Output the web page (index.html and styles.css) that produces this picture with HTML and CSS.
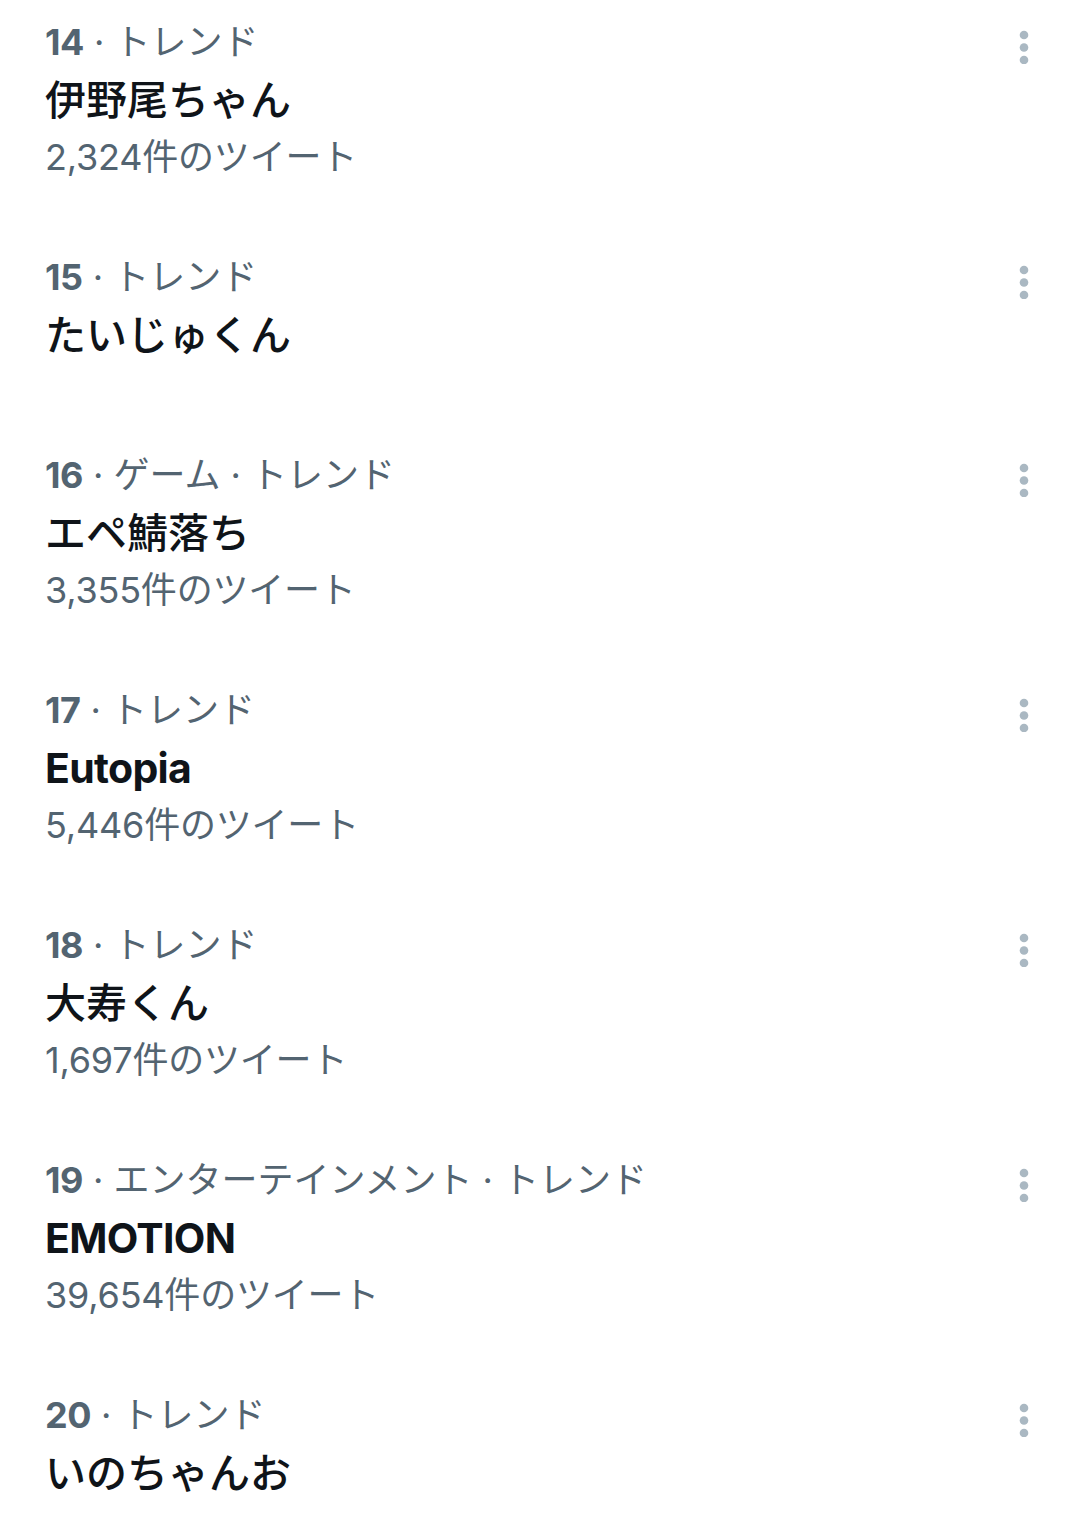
FILE: index.html
```html
<!DOCTYPE html>
<html lang="ja">
<head>
<meta charset="utf-8">
<link rel="stylesheet" href="styles.css">
</head>
<body>
<div class="list">
  <div class="trend">
    <div class="info">
      <div class="meta"><b>14</b> · トレンド</div>
      <div class="name">伊野尾ちゃん</div>
      <div class="count">2,324件のツイート</div>
    </div>
    <svg class="more" viewBox="0 0 40 44"><circle cx="20" cy="15" r="4.3"/><circle cx="20" cy="27.5" r="4.3"/><circle cx="20" cy="40" r="4.3"/></svg>
  </div>
  <div class="trend">
    <div class="info">
      <div class="meta"><b>15</b> · トレンド</div>
      <div class="name">たいじゅくん</div>
    </div>
    <svg class="more" viewBox="0 0 40 44"><circle cx="20" cy="15" r="4.3"/><circle cx="20" cy="27.5" r="4.3"/><circle cx="20" cy="40" r="4.3"/></svg>
  </div>
  <div class="trend">
    <div class="info">
      <div class="meta"><b>16</b> · ゲーム · トレンド</div>
      <div class="name">エペ鯖落ち</div>
      <div class="count">3,355件のツイート</div>
    </div>
    <svg class="more" viewBox="0 0 40 44"><circle cx="20" cy="15" r="4.3"/><circle cx="20" cy="27.5" r="4.3"/><circle cx="20" cy="40" r="4.3"/></svg>
  </div>
  <div class="trend">
    <div class="info">
      <div class="meta"><b>17</b> · トレンド</div>
      <div class="name latin">Eutopia</div>
      <div class="count">5,446件のツイート</div>
    </div>
    <svg class="more" viewBox="0 0 40 44"><circle cx="20" cy="15" r="4.3"/><circle cx="20" cy="27.5" r="4.3"/><circle cx="20" cy="40" r="4.3"/></svg>
  </div>
  <div class="trend">
    <div class="info">
      <div class="meta"><b>18</b> · トレンド</div>
      <div class="name">大寿くん</div>
      <div class="count">1,697件のツイート</div>
    </div>
    <svg class="more" viewBox="0 0 40 44"><circle cx="20" cy="15" r="4.3"/><circle cx="20" cy="27.5" r="4.3"/><circle cx="20" cy="40" r="4.3"/></svg>
  </div>
  <div class="trend">
    <div class="info">
      <div class="meta"><b>19</b> · エンターテインメント · トレンド</div>
      <div class="name latin">EMOTION</div>
      <div class="count">39,654件のツイート</div>
    </div>
    <svg class="more" viewBox="0 0 40 44"><circle cx="20" cy="15" r="4.3"/><circle cx="20" cy="27.5" r="4.3"/><circle cx="20" cy="40" r="4.3"/></svg>
  </div>
  <div class="trend">
    <div class="info">
      <div class="meta"><b>20</b> · トレンド</div>
      <div class="name">いのちゃんお</div>
    </div>
    <svg class="more" viewBox="0 0 40 44"><circle cx="20" cy="15" r="4.3"/><circle cx="20" cy="27.5" r="4.3"/><circle cx="20" cy="40" r="4.3"/></svg>
  </div>
</div>
</body>
</html>
```
FILE: styles.css
```css
html, body {
  margin: 0;
  padding: 0;
  background: #ffffff;
}
body {
  font-family: "Inter", "Noto Sans CJK JP", sans-serif;
  width: 1080px;
  height: 1530px;
  overflow: hidden;
}
.list {
  display: flex;
  flex-direction: column;
}
.trend {
  display: flex;
  justify-content: space-between;
  align-items: flex-start;
  padding: 20px 0 59px 45px;
}
.info {
  display: flex;
  flex-direction: column;
}
.meta {
  font-size: 36px;
  line-height: 44px;
  color: #536471;
  white-space: nowrap;
}
.meta b {
  font-weight: 700;
  letter-spacing: -0.5px;
}
.name {
  margin-top: 8px;
  font-size: 41px;
  line-height: 56px;
  font-weight: 500;
  color: #0f1419;
  margin-bottom: 11px;
}
.name.latin {
  font-weight: 700;
  letter-spacing: -0.7px;
}
.count {
  font-size: 36px;
  line-height: 37px;
  color: #536471;
  letter-spacing: -0.2px;
}
.more {
  width: 40px;
  height: 44px;
  margin-right: 36px;
  fill: #aab8c2;
  flex-shrink: 0;
}
```
